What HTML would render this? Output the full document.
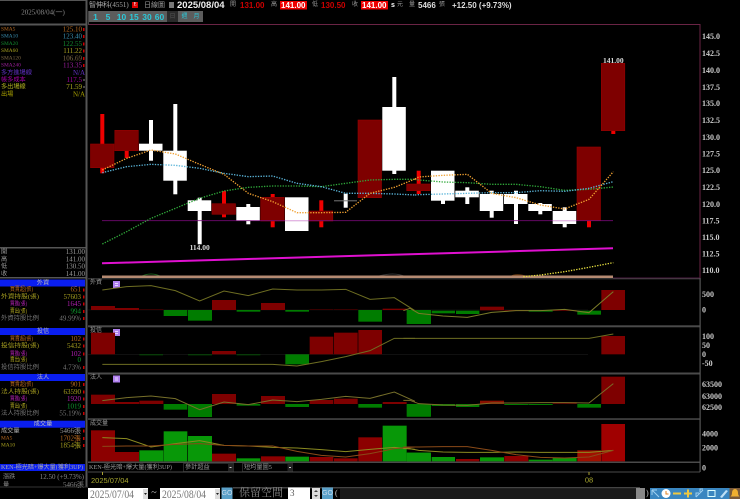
<!DOCTYPE html>
<html><head><meta charset="utf-8">
<style>
html,body{margin:0;padding:0;background:#000;width:740px;height:499px;overflow:hidden}
svg{display:block;filter:blur(.3px)}
text{font-family:"Liberation Serif","Noto Sans CJK TC",serif;font-size:7px;fill:#999;dominant-baseline:central}
.e{text-anchor:end}.m{text-anchor:middle}
.ax{font-size:8px;font-weight:bold;fill:#ccc}
.b{font-family:"Liberation Sans",sans-serif;font-weight:bold;font-size:8px;fill:#c00}
.btn{font-family:"Liberation Sans",sans-serif;font-weight:bold;font-size:8.5px;fill:#2cc8d8;text-anchor:middle}
.c{font-size:6.2px}
.s{font-size:5.4px}
.ln{fill:none;stroke-width:3}
.dot{fill:none;stroke-width:4;stroke-dasharray:4 4}
</style></head><body>
<svg width="740" height="499" viewBox="0 0 740 499" xmlns="http://www.w3.org/2000/svg">
<rect width="740" height="499" fill="#000"/>

<!-- frame -->
<rect x="0" y="0" width="87" height="1" fill="#555"/>
<rect x="0" y="23.5" width="87" height="2" fill="#555"/>
<rect x="85.5" y="0" width="2" height="487" fill="#555"/>
<rect x="88" y="24" width="612" height="1" fill="#6a2445"/>
<rect x="699.5" y="24" width="1" height="254" fill="#6a2445"/>
<rect x="88" y="11" width="1" height="14" fill="#444"/>

<!-- top bar -->
<text x="89" y="5" style="fill:#aaa">智伸科(4551)</text>
<rect x="132" y="2" width="6" height="6" fill="#d00"/>
<text x="135" y="5" class="m" style="font-size:5px;fill:#fff">E</text>
<text x="144" y="5">日線圖</text>
<rect x="169" y="2" width="5" height="6" fill="#777"/>
<text x="177" y="5.5" style="font-family:'Liberation Sans',sans-serif;font-weight:bold;font-size:9.5px;fill:#eee">2025/08/04</text>
<text x="230" y="5" style="font-size:6px">開</text>
<text x="240" y="5.5" class="b">131.00</text>
<text x="271" y="5" style="font-size:6px">高</text>
<rect x="280" y="1" width="27" height="8.5" fill="#e00"/>
<text x="281" y="5.5" class="b" style="fill:#fff">141.00</text>
<text x="312" y="5" style="font-size:6px">低</text>
<text x="321" y="5.5" class="b">130.50</text>
<text x="352" y="5" style="font-size:6px">收</text>
<rect x="361" y="1" width="27" height="8.5" fill="#e00"/>
<text x="362" y="5.5" class="b" style="fill:#fff">141.00</text>
<text x="391" y="5.5" class="b" style="fill:#fff;font-size:7px">s</text>
<text x="397" y="5" style="font-size:6px">元</text>
<text x="409" y="5" style="font-size:6px">量</text>
<text x="418" y="5.5" class="b" style="fill:#ddd">5466</text>
<text x="439" y="5" style="font-size:6px">張</text>
<text x="452" y="5.5" class="b" style="fill:#ddd">+12.50 (+9.73%)</text>

<!-- period buttons -->
<rect x="89" y="11" width="78" height="11" fill="#5c5c5c"/>
<rect x="167" y="11" width="11" height="11" fill="#2a2a2a"/>
<rect x="178" y="11" width="25" height="11" fill="#5c5c5c"/>
<text x="95.500" y="17" class="btn">1</text>
<text x="108" y="17" class="btn">5</text>
<text x="121.5" y="17" class="btn">10</text>
<text x="134" y="17" class="btn">15</text>
<text x="147" y="17" class="btn">30</text>
<text x="159.5" y="17" class="btn">60</text>
<text x="172.5" y="17" class="m" style="font-size:6px;fill:#555">日</text>
<text x="184.5" y="17" class="m" style="font-size:6px;fill:#2cc8d8">週</text>
<text x="196.5" y="17" class="m" style="font-size:6px;fill:#2cc8d8">月</text>

<!-- left panel top -->
<text x="43" y="12.5" class="m" style="font-size:7px;fill:#888">2025/08/04(一)</text>
<g>
<text x="1" y="29.3" class="s" style="fill:#b86a20">SMA5</text><text x="82" y="29.3" class="e" style="fill:#b86a20">125.10</text>
<text x="1" y="36.7" class="s" style="fill:#3a8fb0">SMA10</text><text x="82" y="36.7" class="e" style="fill:#3a8fb0">123.40</text>
<text x="1" y="44" class="s" style="fill:#128a30">SMA20</text><text x="82" y="44" class="e" style="fill:#128a30">122.55</text>
<text x="1" y="51" class="s" style="fill:#a8a020">SMA60</text><text x="82" y="51" class="e" style="fill:#a8a020">111.22</text>
<text x="1" y="58.7" class="s" style="fill:#806a48">SMA120</text><text x="82" y="58.7" class="e" style="fill:#806a48">106.69</text>
<text x="1" y="65.7" class="s" style="fill:#a020a0">SMA240</text><text x="82" y="65.7" class="e" style="fill:#a020a0">113.35</text>
<text x="1" y="73" class="c" style="fill:#6030c0">多方進場線</text><text x="85" y="73" class="e" style="fill:#6030c0">N/A</text>
<text x="1" y="80" class="c" style="fill:#a000a0">帳多成本</text><text x="82" y="80" class="e" style="fill:#a000a0">117.5</text>
<text x="1" y="87" class="c" style="fill:#b0b020">多出場線</text><text x="82" y="87" class="e" style="fill:#b0b020">71.59</text>
<text x="1" y="94.5" class="c" style="fill:#a8a000">出場</text><text x="85" y="94.5" class="e" style="fill:#a8a000">N/A</text>
</g>
<rect x="83" y="28" width="1.5" height="3" fill="#c00"/><rect x="83" y="35" width="1.5" height="3" fill="#c00"/><rect x="83" y="42.5" width="1.5" height="3" fill="#c00"/><rect x="83" y="49.5" width="1.5" height="3" fill="#c00"/><rect x="83" y="57" width="1.5" height="3" fill="#c00"/><rect x="83" y="64" width="1.5" height="3" fill="#c00"/>
<rect x="83" y="79.5" width="2" height="1" fill="#888"/><rect x="83" y="86.5" width="2" height="1" fill="#888"/>

<!-- left OHLC -->
<rect x="0" y="247" width="86" height="1.5" fill="#555"/>
<text x="1" y="252" class="c">開</text><text x="85" y="252" class="e">131.00</text>
<text x="1" y="259.5" class="c">高</text><text x="85" y="259.5" class="e">141.00</text>
<text x="1" y="266.7" class="c">低</text><text x="85" y="266.7" class="e">130.50</text>
<text x="1" y="274" class="c">收</text><text x="85" y="274" class="e">141.00</text>
<rect x="0" y="277" width="86" height="1.5" fill="#555"/>

<!-- foreign -->
<rect x="0" y="279.5" width="85" height="7" fill="#0a1ef0"/>
<text x="43" y="283" class="m c" style="fill:#bbb">外資</text>
<text x="10" y="289.7" class="c" textLength="23" lengthAdjust="spacingAndGlyphs" style="fill:#b86a20">買賣超(張)</text><text x="81" y="289.7" class="e" style="fill:#b86a20">651</text>
<text x="1" y="297" class="c" textLength="38" lengthAdjust="spacingAndGlyphs" style="fill:#a8a020">外資持股(張)</text><text x="81" y="297" class="e" style="fill:#a8a020">57603</text>
<text x="10" y="304" class="c" textLength="17" lengthAdjust="spacingAndGlyphs" style="fill:#b020b0">買進(張)</text><text x="81" y="304" class="e" style="fill:#b020b0">1645</text>
<text x="10" y="311.7" class="c" textLength="17" lengthAdjust="spacingAndGlyphs" style="fill:#a8a020">賣出(張)</text><text x="81" y="311.7" class="e" style="fill:#10a030">994</text>
<text x="1" y="318.7" class="c" textLength="38" lengthAdjust="spacingAndGlyphs" style="fill:#777">外資持股比例</text><text x="81" y="318.7" class="e" style="fill:#777">49.99%</text>
<rect x="83" y="288.5" width="1.5" height="3" fill="#c00"/><rect x="83" y="295.5" width="1.5" height="3" fill="#c00"/><rect x="83" y="302.5" width="1.5" height="3" fill="#c00"/><rect x="83" y="310" width="1.5" height="3" fill="#c00"/><rect x="83" y="317" width="1.5" height="3" fill="#c00"/>

<!-- trust -->
<rect x="0" y="328" width="85" height="7" fill="#0a1ef0"/>
<text x="43" y="331.5" class="m c" style="fill:#bbb">投信</text>
<text x="10" y="339" class="c" textLength="23" lengthAdjust="spacingAndGlyphs" style="fill:#b86a20">買賣超(張)</text><text x="81" y="339" class="e" style="fill:#b86a20">102</text>
<text x="1" y="346" class="c" textLength="38" lengthAdjust="spacingAndGlyphs" style="fill:#a8a020">投信持股(張)</text><text x="81" y="346" class="e" style="fill:#a8a020">5432</text>
<text x="10" y="354" class="c" textLength="17" lengthAdjust="spacingAndGlyphs" style="fill:#b020b0">買進(張)</text><text x="81" y="354" class="e" style="fill:#b020b0">102</text>
<text x="10" y="360" class="c" textLength="17" lengthAdjust="spacingAndGlyphs" style="fill:#a8a020">賣出(張)</text><text x="81" y="360" class="e" style="fill:#10a030">0</text>
<text x="1" y="367.5" class="c" textLength="38" lengthAdjust="spacingAndGlyphs" style="fill:#777">投信持股比例</text><text x="81" y="367.5" class="e" style="fill:#777">4.73%</text>
<rect x="83" y="337.5" width="1.5" height="3" fill="#c00"/><rect x="83" y="344.5" width="1.5" height="3" fill="#c00"/><rect x="83" y="352.5" width="1.5" height="3" fill="#c00"/><rect x="83" y="366" width="1.5" height="3" fill="#c00"/>

<!-- institutional -->
<rect x="0" y="374" width="85" height="7" fill="#0a1ef0"/>
<text x="43" y="377.5" class="m c" style="fill:#bbb">法人</text>
<text x="10" y="384.7" class="c" textLength="23" lengthAdjust="spacingAndGlyphs" style="fill:#b86a20">買賣超(張)</text><text x="81" y="384.7" class="e" style="fill:#b86a20">901</text>
<text x="1" y="392" class="c" textLength="38" lengthAdjust="spacingAndGlyphs" style="fill:#a8a020">法人持股(張)</text><text x="81" y="392" class="e" style="fill:#a8a020">63590</text>
<text x="10" y="399" class="c" textLength="17" lengthAdjust="spacingAndGlyphs" style="fill:#b020b0">買進(張)</text><text x="81" y="399" class="e" style="fill:#b020b0">1920</text>
<text x="10" y="406.5" class="c" textLength="17" lengthAdjust="spacingAndGlyphs" style="fill:#a8a020">賣出(張)</text><text x="81" y="406.5" class="e" style="fill:#10a030">1019</text>
<text x="1" y="413.7" class="c" textLength="38" lengthAdjust="spacingAndGlyphs" style="fill:#777">法人持股比例</text><text x="81" y="413.7" class="e" style="fill:#777">55.19%</text>
<rect x="83" y="383" width="1.5" height="3" fill="#c00"/><rect x="83" y="390.5" width="1.5" height="3" fill="#c00"/><rect x="83" y="397.5" width="1.5" height="3" fill="#c00"/><rect x="83" y="405" width="1.5" height="3" fill="#c00"/><rect x="83" y="412" width="1.5" height="3" fill="#c00"/>

<!-- volume -->
<rect x="0" y="420.7" width="85" height="7" fill="#0a1ef0"/>
<text x="43" y="424" class="m c" style="fill:#bbb">成交量</text>
<text x="1" y="431" class="c" style="fill:#aaa">成交量</text><text x="81" y="431" class="e">5466張</text>
<text x="1" y="438.7" class="s" style="fill:#b86a20">MA5</text><text x="81" y="438.7" class="e" style="fill:#b86a20">1702張</text>
<text x="1" y="445.5" class="s" style="fill:#a8a020">MA10</text><text x="81" y="445.5" class="e" style="fill:#a8a020">1854張</text>
<rect x="83" y="429.5" width="1.5" height="3" fill="#c00"/><rect x="83" y="437" width="1.5" height="3" fill="#c00"/><rect x="83" y="444" width="1.5" height="3" fill="#c00"/>
<rect x="0" y="464" width="85" height="7" fill="#0a1ef0"/>
<text x="1" y="467.5" class="c" textLength="82" lengthAdjust="spacingAndGlyphs" style="fill:#aaa">KEN-極光暗+爆大量(獲利3UP)</text>
<text x="3" y="477" class="c" style="fill:#888">漲跌</text><text x="84" y="477" class="e" style="fill:#888">12.50 (+9.73%)</text>
<text x="3" y="485" class="c" style="fill:#888">量</text><text x="84" y="485" class="e" style="fill:#888">5466張</text>

<!-- candles: wicks -->
<g fill="#ee0000">
<rect x="100.3" y="114" width="4" height="59.3"/>
<rect x="124.7" y="150" width="4" height="8"/>
<rect x="222" y="191" width="4" height="26.3"/>
<rect x="270.7" y="194" width="4" height="33.3"/>
<rect x="319.3" y="200.3" width="4" height="27"/>
<rect x="416.7" y="170.7" width="4" height="23.3"/>
<rect x="587" y="220" width="4" height="7.3"/>
<rect x="611.3" y="130" width="4" height="4"/>
</g>
<g fill="#fff">
<rect x="149" y="120" width="4" height="40.7"/>
<rect x="173.3" y="104" width="4" height="90.3"/>
<rect x="197.7" y="197.7" width="4" height="46.6"/>
<rect x="246.3" y="204" width="4" height="20.3"/>
<rect x="343.7" y="193.7" width="4" height="14"/>
<rect x="392.3" y="77" width="4" height="97"/>
<rect x="441" y="200" width="4" height="4"/>
<rect x="465.3" y="187.3" width="4" height="16.7"/>
<rect x="489.7" y="190.7" width="4" height="27"/>
<rect x="514" y="190.7" width="4" height="33.3"/>
<rect x="538.3" y="203" width="4" height="11.3"/>
<rect x="562.7" y="207.3" width="4" height="20"/>
</g>
<rect x="334" y="200.3" width="23" height="1" fill="#777"/>
<g fill="#7e0000" stroke="#960000" stroke-width=".6">
<rect x="90.5" y="144" width="23.5" height="23.7"/>
<rect x="114.8" y="130.3" width="23.5" height="20.4"/>
<rect x="212" y="203.7" width="23.5" height="10.6"/>
<rect x="260.7" y="197.3" width="23.5" height="23.7"/>
<rect x="309.3" y="211" width="23.5" height="10"/>
<rect x="358" y="120" width="23.5" height="77.7"/>
<rect x="406.7" y="184" width="23.5" height="6.7"/>
<rect x="577" y="147" width="23.5" height="73.7"/>
<rect x="601.3" y="63.3" width="23.5" height="67.4"/>
</g>
<g fill="#fff">
<rect x="139" y="143.7" width="23.5" height="7"/>
<rect x="163.3" y="150.7" width="23.5" height="30"/>
<rect x="187.7" y="200.3" width="23.5" height="10.7"/>
<rect x="236.3" y="207" width="23.5" height="14"/>
<rect x="285" y="197.3" width="23.5" height="33.7"/>
<rect x="382.3" y="107" width="23.5" height="63.7"/>
<rect x="431" y="170.7" width="23.5" height="30"/>
<rect x="455.3" y="190.7" width="23.5" height="6.6"/>
<rect x="479.7" y="194" width="23.5" height="17"/>
<rect x="504" y="194" width="23.5" height="10"/>
<rect x="528.3" y="204" width="23.5" height="7"/>
<rect x="552.7" y="211" width="23.5" height="13"/>
</g>

<!-- main overlays -->
<rect x="102" y="220.3" width="511" height=".8" fill="#7a0a7a"/>
<rect x="285" y="220.3" width="23.5" height=".8" fill="#f0c0f0"/>
<rect x="552.7" y="220.3" width="23.5" height=".8" fill="#f0c0f0"/>
<path d="M102 263.3L613 248.3" stroke="#e010d0" stroke-width="2" fill="none"/>
<path d="M140 277Q151 271 162 277" stroke="#1a5a1a" fill="none"/>
<path d="M376 277Q394 271 406 277" stroke="#333" fill="none"/>
<path d="M510 277Q516 273 528 277" stroke="#6a3a10" stroke-width="1.5" fill="none"/>
<rect x="102" y="275.5" width="511" height="2.5" fill="#b58a72"/>
<rect x="613" y="277.5" width="87" height="1" fill="#4a1840"/>

<g transform="translate(85,30) scale(.33333)">
<polyline class="dot" stroke="#2fa83a" points="52,642 125,605 198,565 271,535 344,505 417,483 490,472 563,468 636,468 709,470 782,460 855,450 928,448 990,448"/>
<polyline class="dot" stroke="#5ab4d8" points="52,428 125,410 198,403 271,406 344,415 417,430 490,440 563,438 636,460 709,470 782,490 855,490 928,492 990,495"/>
<polyline class="dot" stroke="#f0a030" points="52,420 125,385 198,360 271,372 344,403 417,433 490,490 563,515 636,548 709,548 782,547 855,490 928,472 990,447"/>
</g>
<g transform="translate(410,30) scale(.33333)">
<polyline class="dot" stroke="#2fa83a" points="15,448 26,450 99,456 172,458 245,463 318,463 391,470 464,481 537,478 610,471"/>
<polyline class="dot" stroke="#5ab4d8" points="15,495 26,494 99,492 172,490 245,488 318,488 391,482 464,484 537,475 610,455"/>
<polyline class="dot" stroke="#f0a030" points="15,447 26,441 99,436 172,433 245,490 318,503 391,525 464,537 537,508 610,425"/>
<polyline class="dot" stroke="#e8e040" points="340,740 391,735 464,725 537,712 610,698"/>
</g>
<text x="199.7" y="247.3" class="m" style="font-size:7.5px;font-weight:bold;fill:#ddd">114.00</text>
<text x="613.3" y="60.3" class="m" style="font-size:7.5px;font-weight:bold;fill:#ddd">141.00</text>

<!-- axis -->
<g>
<text x="702" y="36.7" class="ax">145.0</text><text x="702" y="53.7" class="ax">142.5</text>
<text x="702" y="70.3" class="ax">140.0</text><text x="702" y="87.3" class="ax">137.5</text>
<text x="702" y="103.7" class="ax">135.0</text><text x="702" y="120.7" class="ax">132.5</text>
<text x="702" y="137.3" class="ax">130.0</text><text x="702" y="154" class="ax">127.5</text>
<text x="702" y="170.7" class="ax">125.0</text><text x="702" y="187.3" class="ax">122.5</text>
<text x="702" y="204.3" class="ax">120.0</text><text x="702" y="221" class="ax">117.5</text>
<text x="702" y="237.3" class="ax">115.0</text><text x="702" y="254" class="ax">112.5</text>
<text x="702" y="270.7" class="ax">110.0</text>
<text x="702" y="294.7" class="ax">500</text><text x="702" y="310" class="ax">0</text>
<text x="702" y="336.7" class="ax">100</text><text x="702" y="345.3" class="ax">50</text>
<text x="702" y="354.3" class="ax">0</text><text x="702" y="363.3" class="ax">-50</text>
<text x="702" y="384.7" class="ax">63500</text><text x="702" y="396.3" class="ax">63000</text><text x="702" y="407.7" class="ax">62500</text>
<text x="702" y="434" class="ax">4000</text><text x="702" y="448" class="ax">2000</text><text x="702" y="468" class="ax">0</text>
</g>

<!-- pane separators -->
<rect x="88" y="278.3" width="612" height="1" fill="#444"/>
<rect x="88" y="325.3" width="612" height="2" fill="#4a4a4a"/>
<rect x="88" y="372.5" width="612" height="2" fill="#4a4a4a"/>
<rect x="88" y="418.3" width="612" height="1.5" fill="#4a4a4a"/>
<rect x="88" y="461.5" width="612" height="1.5" fill="#4a4a4a"/>
<rect x="88" y="471.5" width="612" height="1" fill="#4a4a4a"/>
<rect x="699.5" y="278" width="1.2" height="194" fill="#555"/>
<rect x="88" y="309.7" width="500" height=".5" fill="#1a1a1a"/>
<rect x="88" y="354" width="500" height=".6" fill="#1c1c1c"/>

<text x="90" y="283" style="fill:#999;font-size:6px">外資</text>
<text x="90" y="331" style="fill:#999;font-size:6px">投信</text>
<text x="90" y="378" style="fill:#999;font-size:6px">法人</text>
<text x="90" y="424" style="fill:#999;font-size:6px">成交量</text>
<g fill="#b080ee">
<rect x="113" y="281" width="7" height="7"/><rect x="113" y="329" width="7" height="7"/><rect x="113" y="375.5" width="7" height="7"/>
</g>
<g fill="#e8d8ff">
<rect x="115" y="283" width="3" height="1"/><rect x="115" y="285" width="3" height="1"/><rect x="115" y="331" width="3" height="1"/><rect x="115" y="333" width="3" height="1"/><rect x="115" y="377.5" width="3" height="1"/><rect x="115" y="379.5" width="3" height="1"/>
</g>

<!-- foreign bars -->
<g transform="translate(85,275) scale(.33333)">
<g fill="#7e0000">
<rect x="18" y="93" width="72" height="12"/>
<rect x="90" y="99" width="72" height="6"/>
<rect x="163" y="103" width="72" height="2" fill="#500"/>
<rect x="381" y="75" width="72" height="30"/>
<rect x="528" y="84" width="72" height="21"/>
<rect x="674" y="103" width="71" height="2" fill="#500"/>
<rect x="747" y="103" width="71" height="2" fill="#500"/>
<rect x="893" y="101" width="72" height="4"/>
</g>
<g fill="#007c00">
<rect x="236" y="105" width="71" height="18"/>
<rect x="309" y="105" width="72" height="32"/>
<rect x="455" y="105" width="71" height="5"/>
<rect x="601" y="105" width="71" height="5"/>
<rect x="820" y="105" width="71" height="35"/>
<rect x="966" y="105" width="72" height="42"/>
</g>
<polyline class="ln" stroke="#6e6e22" points="52,45 125,35 198,32 271,47 344,78 417,48 490,62 563,42 636,45 709,45 782,43 855,73 928,68 990,107"/>
</g>
<g transform="translate(410,275) scale(.33333)">
<rect x="-10" y="105" width="72" height="42" fill="#007c00"/>
<rect x="65" y="107" width="70" height="8" fill="#007c00"/>
<rect x="138" y="107" width="70" height="10" fill="#007c00"/>
<rect x="210" y="95" width="72" height="11" fill="#7e0000"/>
<rect x="283" y="105" width="72" height="3" fill="#500"/>
<rect x="356" y="105" width="72" height="5" fill="#007c00"/>
<rect x="428" y="105" width="72" height="3" fill="#500"/>
<rect x="502" y="107" width="71" height="12" fill="#007c00"/>
<rect x="574" y="45" width="71" height="60" fill="#7e0000"/>
<polyline class="ln" stroke="#7a7a28" points="-20,107 0,100 26,115 99,123 172,127 245,112 318,107 391,107 464,103 537,113 610,50"/>
</g>

<!-- trust bars -->
<g transform="translate(85,275) scale(.33333)">
<g fill="#7e0000">
<rect x="18" y="173" width="72" height="65"/>
<rect x="381" y="228" width="72" height="10"/>
<rect x="674" y="185" width="71" height="53"/>
<rect x="747" y="173" width="71" height="65"/>
<rect x="820" y="165" width="71" height="73"/>
</g>
<g fill="#007c00">
<rect x="163" y="238" width="71" height="3" fill="#004a00"/>
<rect x="309" y="238" width="72" height="3" fill="#004a00"/>
<rect x="455" y="238" width="71" height="3" fill="#004a00"/>
<rect x="601" y="238" width="71" height="30"/>
</g>
<polyline class="ln" stroke="#6e6e22" points="52,268 563,268 636,273 709,260 782,245 855,227 928,190 990,190"/>
</g>
<g transform="translate(410,275) scale(.33333)">
<rect x="574" y="183" width="71" height="55" fill="#7e0000"/>
<polyline class="ln" stroke="#6e6e22" points="-20,190 537,190 610,177"/>
</g>

<!-- institutional bars -->
<g transform="translate(85,372) scale(.33333)">
<g fill="#7e0000">
<rect x="18" y="68" width="72" height="28"/>
<rect x="90" y="90" width="72" height="6"/>
<rect x="163" y="86" width="72" height="10"/>
<rect x="381" y="66" width="72" height="30"/>
<rect x="528" y="72" width="72" height="24"/>
<rect x="674" y="84" width="71" height="12"/>
<rect x="747" y="80" width="71" height="16"/>
<rect x="893" y="90" width="72" height="6"/>
</g>
<g fill="#007c00">
<rect x="236" y="96" width="71" height="17"/>
<rect x="309" y="96" width="72" height="39"/>
<rect x="455" y="96" width="71" height="5"/>
<rect x="601" y="96" width="71" height="9"/>
<rect x="820" y="96" width="71" height="11"/>
<rect x="966" y="96" width="72" height="38"/>
</g>
<polyline class="ln" stroke="#77702a" points="52,86 125,77 198,72 271,80 344,113 417,90 490,98 563,84 636,89 709,82 782,73 855,79 928,60 990,88"/>
</g>
<g transform="translate(410,372) scale(.33333)">
<rect x="-10" y="96" width="72" height="38" fill="#007c00"/>
<rect x="65" y="96" width="70" height="6" fill="#007c00"/>
<rect x="138" y="96" width="70" height="9" fill="#007c00"/>
<rect x="210" y="86" width="72" height="10" fill="#8a1000"/>
<rect x="283" y="96" width="72" height="3" fill="#007c00"/>
<rect x="356" y="96" width="72" height="3" fill="#007c00"/>
<rect x="428" y="90" width="72" height="6" fill="#500"/>
<rect x="502" y="96" width="71" height="11" fill="#007c00"/>
<rect x="574" y="14" width="71" height="82" fill="#7e0000"/>
<polyline class="ln" stroke="#7a6e28" points="-20,85 0,85 26,95 99,99 172,100 245,93 318,93 391,92 464,92 537,93 610,35"/>
</g>

<!-- volume bars -->
<g transform="translate(85,372) scale(.33333)">
<g fill="#8c0000">
<rect x="18" y="175" width="72" height="93"/>
<rect x="90" y="240" width="72" height="28"/>
<rect x="381" y="245" width="72" height="23"/>
<rect x="528" y="253" width="72" height="15"/>
<rect x="674" y="255" width="71" height="13"/>
<rect x="747" y="259" width="71" height="9"/>
<rect x="820" y="196" width="71" height="72"/>
</g>
<g fill="#089808">
<rect x="163" y="235" width="72" height="33"/>
<rect x="236" y="178" width="71" height="90"/>
<rect x="309" y="192" width="72" height="76"/>
<rect x="455" y="259" width="71" height="9"/>
<rect x="601" y="254" width="71" height="14"/>
<rect x="893" y="161" width="72" height="107"/>
<rect x="966" y="242" width="72" height="26"/>
</g>
<polyline class="ln" stroke="#8a8a20" points="52,197 125,200 198,225 271,215 344,206 417,220 490,222 563,226 636,228 709,233 782,239 855,232 928,226 990,232"/>
<polyline class="ln" stroke="#8a4a18" points="52,223 125,222 198,222 271,217 344,215 417,220 490,222 563,222 636,238 709,250 782,255 855,245 928,230 990,225"/>
</g>
<g transform="translate(410,372) scale(.33333)">
<rect x="-10" y="242" width="72" height="26" fill="#089808"/>
<rect x="65" y="255" width="70" height="13" fill="#089808"/>
<rect x="138" y="261" width="70" height="7" fill="#8c0000"/>
<rect x="210" y="256" width="72" height="12" fill="#089808"/>
<rect x="283" y="252" width="72" height="16" fill="#8c0000"/>
<rect x="356" y="263" width="72" height="5" fill="#089808"/>
<rect x="428" y="258" width="72" height="10" fill="#089808"/>
<rect x="502" y="235" width="71" height="33" fill="#a01000"/>
<rect x="574" y="156" width="71" height="112" fill="#a00000"/>
<polyline class="ln" stroke="#8a8a20" points="-20,230 0,230 26,235 99,240 172,241 245,241 318,240 391,241 464,241 537,241 610,235"/>
<polyline class="ln" stroke="#8a4a18" points="-20,225 26,225 99,224 172,224 245,235 318,248 391,256 464,258 537,255 610,235"/>
</g>

<!-- strategy strip -->
<text x="89" y="467.5" class="c" textLength="83" lengthAdjust="spacingAndGlyphs" style="fill:#999">KEN-極光暗+爆大量(獲利3UP)</text>
<rect x="183.5" y="463.5" width="50" height="8" fill="#000" stroke="#444" stroke-width=".6"/>
<rect x="228" y="464" width="5" height="7" fill="#222"/><rect x="229.5" y="467" width="2" height="1" fill="#ccc"/>
<text x="185" y="467.500" class="c">參計超益</text>
<rect x="242.5" y="463.5" width="50" height="8" fill="#000" stroke="#444" stroke-width=".6"/>
<rect x="287.5" y="464" width="5" height="7" fill="#222"/><rect x="289" y="467" width="2" height="1" fill="#ccc"/>
<text x="244" y="467.5" class="c">短均量圖5</text>

<!-- date axis -->
<rect x="102" y="472" width="1" height="3" fill="#a8a030"/>
<text x="91" y="480.7" style="font-family:'Liberation Sans',sans-serif;font-size:7.5px;fill:#a8a830">2025/07/04</text>
<rect x="588.5" y="472" width="1" height="3" fill="#a8a030"/>
<text x="589" y="480" class="m" style="font-family:'Liberation Sans',sans-serif;font-size:7.5px;fill:#a8a830">08</text>

<!-- bottom controls -->
<rect x="233" y="487" width="407" height="1.5" fill="#444"/>
<rect x="0" y="486.5" width="88" height="1" fill="#333"/>
<rect x="88" y="488" width="60" height="11" fill="#fff"/>
<text x="90" y="494" textLength="44" lengthAdjust="spacingAndGlyphs" style="font-size:12px;fill:#777">2025/07/04</text>
<rect x="143" y="489" width="5" height="10" fill="#ddd"/><path d="M144 493l1.500 2 1.500-2z" fill="#222"/>
<text x="154" y="493" class="m" style="font-size:10px;fill:#aaa">~</text>
<rect x="160" y="488" width="60" height="11" fill="#fff"/>
<text x="162" y="494" textLength="44" lengthAdjust="spacingAndGlyphs" style="font-size:12px;fill:#777">2025/08/04</text>
<rect x="215" y="489" width="5" height="10" fill="#ddd"/><path d="M216 493l1.500 2 1.500-2z" fill="#222"/>
<rect x="221.5" y="487.5" width="11" height="11.5" fill="#5aa0c8"/>
<text x="227" y="493.5" class="m" style="font-family:'Liberation Sans',sans-serif;font-size:7px;fill:#cde">GO</text>
<text x="239" y="493" style="font-family:'Liberation Serif','Noto Serif CJK TC',serif;font-size:11px;fill:#888">保留空間</text>
<rect x="288" y="487.5" width="22" height="11.5" fill="#fff"/>
<text x="290" y="493" style="font-size:9px;fill:#555">3</text>
<rect x="312" y="488" width="8" height="11" fill="#ddd"/>
<path d="M314 492l2-2 2 2zM314 495l2 2 2-2z" fill="#444"/>
<rect x="322" y="487.5" width="11" height="11.5" fill="#5aa0c8"/>
<text x="327.5" y="493.5" class="m" style="font-family:'Liberation Sans',sans-serif;font-size:7px;fill:#cde">GO</text>
<text x="335" y="493" style="font-size:8px;fill:#ccc">(</text>
<rect x="340" y="489" width="296" height="10" fill="#1a1a1a"/>
<rect x="636" y="488" width="9" height="11" fill="#888"/>
<text x="646" y="493" style="font-size:8px;fill:#ccc">)</text>

<!-- toolbar icons -->
<rect x="650" y="488" width="90" height="11" fill="#3a86c0"/>
<path d="M652 490v5M652 490h5M652 490l7 7" stroke="#9fd0f0" stroke-width="1" fill="none"/>
<circle cx="666" cy="493.5" r="4.5" fill="#fff"/><path d="M666 491v3h2.5" stroke="#e08020" fill="none"/>
<rect x="673" y="492.5" width="8" height="2" fill="#f0c840"/>
<rect x="684" y="492.5" width="8" height="2" fill="#f0c840"/><rect x="687" y="489.5" width="2" height="8" fill="#f0c840"/>
<path d="M696 497v-4h3M703 489h-3v3M696 497l7-7" stroke="#9fd0f0" fill="none"/>
<rect x="708" y="490.5" width="7" height="6" stroke="#dff" fill="none"/>
<path d="M720 497l6-7 2 1-6 7z" fill="#bfe0f5"/>
<rect x="729.5" y="488" width="10.5" height="11" fill="#7a5a3a"/>
<path d="M735 489c-2 0-3 2-3 4s-1 3-1.500 3.500h9c-.5-.5-1.500-1.500-1.500-3.500s-1-4-3-4z" fill="#f0b030"/>
</svg>
</body></html>
